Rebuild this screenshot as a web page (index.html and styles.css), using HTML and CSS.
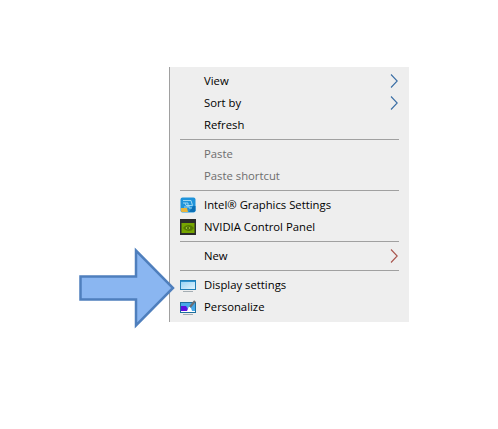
FILE: index.html
```html
<!DOCTYPE html>
<html lang="en">
<head>
<meta charset="utf-8">
<title>Desktop context menu</title>
<link rel="stylesheet" href="styles.css">
</head>
<body>
<div class="menu">
  <div class="row"><span class="label">View</span><svg class="chev" viewBox="0 0 8 14"><path d="M1 .5 7.200 7 1 13.500" fill="none" stroke="#3a6ea5" stroke-width="1.100"/></svg></div>
  <div class="row"><span class="label">Sort by</span><svg class="chev" viewBox="0 0 8 14"><path d="M1 .5 7.200 7 1 13.500" fill="none" stroke="#3a6ea5" stroke-width="1.100"/></svg></div>
  <div class="row"><span class="label">Refresh</span></div>
  <div class="sep"></div>
  <div class="row off"><span class="label">Paste</span></div>
  <div class="row off"><span class="label">Paste shortcut</span></div>
  <div class="sep"></div>
  <div class="row">
    <svg class="icon" viewBox="0 0 16 16"><rect x=".5" y=".5" width="15" height="15" rx="2" fill="#1f93da"/><path d="M1 11v3.500L2 15h6l-1-4z" fill="#e8b53c"/><path d="M13 9h2.500v5L14 15h-5z" fill="#0b6fb5"/><path d="M3 3.500h8l1.500 5H6L5 6M3 6h5v4H4M9 8v3h3" fill="none" stroke="#a9def5" stroke-width=".9"/></svg>
    <span class="label">Intel® Graphics Settings</span>
  </div>
  <div class="row">
    <svg class="icon" viewBox="0 0 16 16"><rect width="16" height="16" fill="#2b2b2b"/><rect x="1.500" y="4" width="13" height="10" fill="#76a500"/><path d="M3 9C5 6 9 5.300 11.500 6.800L14 9 11.500 11.500C8.500 12.500 5.500 12 3 9Z" fill="#557a00"/><path d="M5.500 9C7 7.300 9 7.500 10.300 9 9 10.500 7 10.800 5.500 9Z" fill="#a5cf3a"/><circle cx="8" cy="9" r="1" fill="#3b5500"/></svg>
    <span class="label">NVIDIA Control Panel</span>
  </div>
  <div class="sep"></div>
  <div class="row"><span class="label">New</span><svg class="chev" viewBox="0 0 8 14"><path d="M1 .5 7.200 7 1 13.500" fill="none" stroke="#a8544c" stroke-width="1.100"/></svg></div>
  <div class="sep"></div>
  <div class="row">
    <svg class="icon tall" viewBox="0 0 16 18"><defs><linearGradient id="sky" x1="0" y1="0" x2="1" y2="1"><stop offset="0" stop-color="#8fd0f4"/><stop offset="1" stop-color="#e6f5fd"/></linearGradient></defs><rect x=".5" y="3.500" width="15" height="9" fill="url(#sky)" stroke="#1f7fb8"/><path d="M1 4.500h14" stroke="#2f93cf"/><path d="M3 14.500h10" stroke="#a4adb3"/></svg>
    <span class="label">Display settings</span>
  </div>
  <div class="row">
    <svg class="icon tall" viewBox="0 0 16 18"><rect x=".5" y="3.500" width="15" height="10" fill="#48a8e8" stroke="#1e6f9e"/><path d="M1 7h5l3 5H1z" fill="#5a10e0"/><path d="M1 12.500h14" stroke="#fff"/><path d="M7 12 9 7.500l2 1.500 1 3z" fill="#fff"/><path d="M10 8 15 2" stroke="#6c6f73" stroke-width="2.200"/><path d="M3 15.500h10" stroke="#a4adb3"/></svg>
    <span class="label">Personalize</span>
  </div>
</div>
<svg class="arrow" viewBox="0 0 110 95"><path d="M10.500 36.500H66V10.500L103 48 66 85.500V59.500H10.500Z" fill="#8ab6f1" stroke="#4f7fbd" stroke-width="2.500"/></svg>
</body>
</html>
```
FILE: styles.css
```css
html, body {
  margin: 0;
  background: #fff;
}
body {
  width: 498px;
  height: 429px;
  padding: 67px 0 0 169px;
  box-sizing: border-box;
  overflow: hidden;
}
.menu {
  width: 240px;
  box-sizing: border-box;
  background: #eeeeee;
  border-left: 1px solid #a0a0a0;
  padding: 3px 0 4px;
  font: 11.3px/22px "Open Sans", sans-serif;
  color: #000;
}
.row {
  position: relative;
  height: 22px;
  display: flex;
  align-items: center;
  padding-left: 34px;
}
.off { color: #6d6d6d; }
.icon {
  position: absolute;
  left: 10px;
  top: 3px;
  width: 16px;
  height: 16px;
}
.icon.tall {
  top: 3px;
  height: 18px;
}
.chev {
  position: absolute;
  left: 220px;
  top: 4px;
  width: 8px;
  height: 14px;
}
.sep {
  height: 1px;
  margin: 3px 10px 3px 10px;
  background: #a0a0a0;
}
.arrow {
  position: absolute;
  left: 70px;
  top: 240px;
  width: 110px;
  height: 95px;
}
```
